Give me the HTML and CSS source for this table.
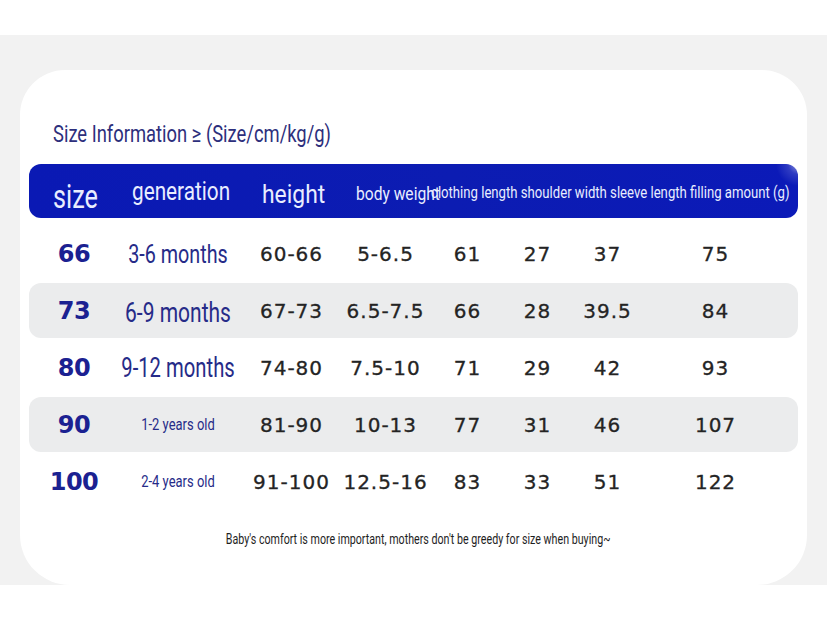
FILE: index.html
```
<!DOCTYPE html>
<html lang="en">
<head>
<meta charset="utf-8">
<title>Size Information</title>
<link rel="stylesheet" href="styles.css">
</head>
<body>
<div class="panel">
  <div class="card">
    <h1 class="title">Size Information ≥ (Size/cm/kg/g)</h1>
    <div class="head">
      <span class="h h-size">size</span>
      <span class="h h-gen">generation</span>
      <span class="h h-height">height</span>
      <span class="h h-weight">body weight</span>
      <span class="h h-rest">clothing length shoulder width sleeve length filling amount (g)</span>
    </div>
    <div class="rows">
      <div class="row">
        <span class="c size">66</span><span class="c gen g-1">3-6 months</span><span class="c num">60-66</span><span class="c num">5-6.5</span><span class="c num">61</span><span class="c num">27</span><span class="c num">37</span><span class="c num">75</span>
      </div>
      <div class="row alt">
        <span class="c size">73</span><span class="c gen g-2">6-9 months</span><span class="c num">67-73</span><span class="c num">6.5-7.5</span><span class="c num">66</span><span class="c num">28</span><span class="c num">39.5</span><span class="c num">84</span>
      </div>
      <div class="row">
        <span class="c size">80</span><span class="c gen g-3">9-12 months</span><span class="c num">74-80</span><span class="c num">7.5-10</span><span class="c num">71</span><span class="c num">29</span><span class="c num">42</span><span class="c num">93</span>
      </div>
      <div class="row alt">
        <span class="c size">90</span><span class="c gen g-sm">1-2 years old</span><span class="c num">81-90</span><span class="c num">10-13</span><span class="c num">77</span><span class="c num">31</span><span class="c num">46</span><span class="c num">107</span>
      </div>
      <div class="row">
        <span class="c size">100</span><span class="c gen g-sm">2-4 years old</span><span class="c num">91-100</span><span class="c num">12.5-16</span><span class="c num">83</span><span class="c num">33</span><span class="c num">51</span><span class="c num">122</span>
      </div>
    </div>
    <p class="note">Baby's comfort is more important, mothers don't be greedy for size when buying~</p>
  </div>
</div>
</body>
</html>
```
FILE: styles.css
```
* { box-sizing: border-box; }
html, body { margin: 0; padding: 0; background: #ffffff; }
body {
  width: 827px;
  height: 621px;
  overflow: hidden;
  font-family: Roboto, "Liberation Sans", sans-serif;
}
.panel {
  margin-top: 35px;
  height: 550px;
  background: #f2f2f2;
  padding: 35px 20px 0 20px;
}
.card {
  height: 515px;
  background: #ffffff;
  border-radius: 45px 45px 50px 50px;
  padding: 50px 9px 0 9px;
  display: flex;
  flex-direction: column;
}
.title {
  margin: 0 0 16px 24px;
  font-family: Roboto, sans-serif;
  font-weight: normal;
  font-size: 24px;
  line-height: 28px;
  color: #2d2f7c;
  white-space: nowrap;
  transform: scaleX(0.766);
  transform-origin: 0 50%;
}
.head {
  height: 54px;
  border-radius: 12px;
  background:
    radial-gradient(circle at 100% 0%, rgba(255,255,255,0.55) 0, rgba(255,255,255,0.15) 10px, rgba(255,255,255,0) 22px),
    linear-gradient(90deg, #0a19b4 0%, #0c1cb2 55%, #0b1ab8 100%);
  display: flex;
  align-items: flex-start;
  padding-left: 24px;
  color: #e9edff;
  white-space: nowrap;
}
.h { flex: none; line-height: 1; transform-origin: 0 50%; }
.h-size { width: 79px; font-size: 33px; margin-top: 16px; transform: scaleX(0.764); }
.h-gen { width: 130px; font-size: 25px; margin-top: 15px; transform: scaleX(0.83); }
.h-height { width: 94px; font-size: 26px; margin-top: 17px; transform: scaleX(0.88); }
.h-weight { width: 75px; font-size: 19px; margin-top: 20px; transform: scaleX(0.82); }
.h-rest { font-size: 17px; margin-top: 20px; transform: scaleX(0.773); }
.rows {
  margin-top: 8px;
  display: flex;
  flex-direction: column;
  gap: 2px;
}
.row {
  height: 55px;
  border-radius: 12px;
  display: grid;
  grid-template-columns: 90px 118px 108px 80px 84px 56px 84px 132px;
  align-items: center;
}
.row.alt { background: #ebeced; }
.c {
  display: flex;
  justify-content: center;
  white-space: nowrap;
  line-height: 1;
}
.size {
  font-family: "DejaVu Sans", sans-serif;
  font-weight: bold;
  font-size: 24px;
  color: #1b2191;
  letter-spacing: -0.5px;
}
.gen {
  font-family: Roboto, sans-serif;
  color: #262b88;
}
.g-1 { font-size: 25px; padding-top: 2px; transform: scaleX(0.79); }
.g-2 { font-size: 28px; padding-top: 5px; transform: scaleX(0.75); }
.g-3 { font-size: 27px; padding-top: 2px; transform: scaleX(0.75); }
.g-sm { font-size: 16px; transform: scaleX(0.81); }
.num {
  font-family: "DejaVu Sans", sans-serif;
  font-size: 20px;
  color: #242424;
  letter-spacing: 1px;
  padding-left: 1px;
  -webkit-text-stroke: 0.3px #242424;
}
.note {
  margin: 22px 0 0 0;
  padding-left: 12px;
  text-align: center;
  font-size: 14px;
  line-height: 16px;
  color: #1e1e1e;
  white-space: nowrap;
  transform: scaleX(0.763);
}
```
